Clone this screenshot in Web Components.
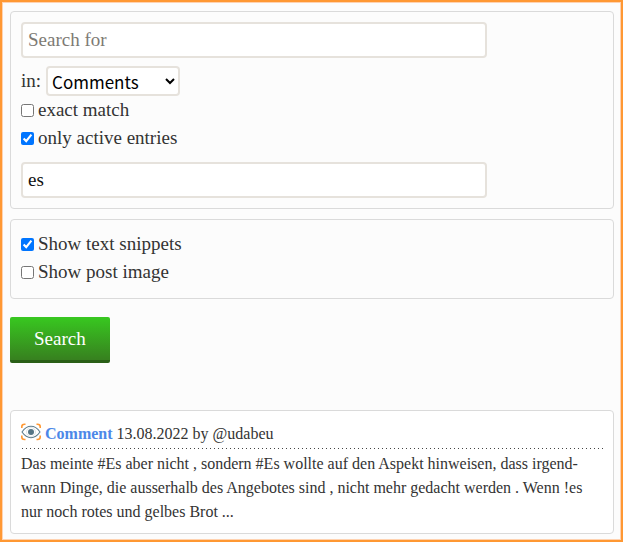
<!DOCTYPE html>
<html lang="de">
<head>
<meta charset="utf-8">
<meta name="viewport" content="width=device-width, initial-scale=1">
<title>Search</title>
<style>
  body {
    margin: 0;
    color: #333;
    font: 19px/28px "Liberation Serif", "Times New Roman", serif;
  }
</style>
</head>
<body>
<search-page>
  <search-form></search-form>
  <search-result slot="results" kind="Comment" date="13.08.2022" author="@udabeu">Das meinte #Es aber nicht , sondern #Es wollte auf den Aspekt hinweisen, dass irgend&shy;wann Dinge, die ausserhalb des Angebotes sind , nicht mehr gedacht werden . Wenn !es nur noch rotes und gelbes Brot ...</search-result>
</search-page>

<script>
function define(name, html, setup) {
  const template = document.createElement("template");
  template.innerHTML = html;

  window.customElements.define(name, class extends HTMLElement {
    constructor() {
      super();
      this.attachShadow({ mode: "open" });
      this.shadowRoot.appendChild(template.content.cloneNode(true));
    }

    connectedCallback() {
      if (setup) setup(this, this.shadowRoot);
    }
  });
}

define("search-page", /*html*/ `
  <style>
    :host {
      display: flex;
      flex-direction: column;
      gap: 47px;
      box-sizing: border-box;
      min-height: 100vh;
      padding: 9px 7px 6px 8px;
      border: 2px solid #ff9833;
      box-shadow: inset 0 0 0 1px #ffd2b0;
      background: #fcfcfc;
    }
  </style>
  <slot></slot>
  <slot name="results"></slot>
`);

define("form-panel", /*html*/ `
  <style>
    :host {
      display: flex;
      flex-direction: column;
      gap: 8px;
      padding: 10px;
      border: 1px solid #dadada;
      border-radius: 4px;
    }
  </style>
  <slot></slot>
`);

define("text-field", /*html*/ `
  <style>
    :host { display: block; }
    input {
      display: block;
      box-sizing: border-box;
      width: 80%;
      height: 36px;
      margin: 0;
      padding: 0 5px;
      border: 2px solid #e6e2dc;
      border-radius: 4px;
      background: #fff;
      color: #111;
      font: inherit;
    }
    input::placeholder { color: #7d7a74; }
  </style>
  <input type="text">
`, (host, root) => {
  const input = root.querySelector("input");
  input.placeholder = host.getAttribute("placeholder") || "";
  input.value = host.getAttribute("value") || "";
  input.setAttribute("aria-label", host.getAttribute("label"));
});

define("area-select", /*html*/ `
  <style>
    :host {
      display: flex;
      align-items: center;
      gap: 5px;
    }
    select {
      box-sizing: border-box;
      width: 134px;
      height: 30px;
      margin: 0;
      padding: 0;
      border: 2px solid #e6e2dc;
      border-radius: 4px;
      background: #fff;
      color: #000;
      font: 17px "Noto Sans CJK SC", "Noto Sans", sans-serif;
    }
  </style>
  <label for="area">in:</label>
  <select id="area">
    <option>Comments</option>
  </select>
`);

define("check-option", /*html*/ `
  <style>
    :host { display: block; }
    label {
      display: flex;
      align-items: center;
      gap: 4px;
    }
    input {
      width: 13px;
      height: 13px;
      margin: 0;
    }
  </style>
  <label><input type="checkbox"><span><slot></slot></span></label>
`, (host, root) => {
  root.querySelector("input").checked = host.hasAttribute("checked");
});

define("search-form", /*html*/ `
  <style>
    :host { display: block; }
    form {
      display: flex;
      flex-direction: column;
      gap: 10px;
    }
    .options { padding-bottom: 2px; }
    button {
      align-self: flex-start;
      height: 46px;
      margin: 8px 0 0;
      padding: 0 24px;
      border: 0;
      border-bottom: 3px solid #2a5f17;
      border-radius: 2px;
      background: linear-gradient(#38c820, #37801f);
      color: #fff;
      font: inherit;
      cursor: pointer;
    }
  </style>
  <form onsubmit="return false">
    <form-panel>
      <text-field label="Search for" placeholder="Search for"></text-field>
      <div class="options">
        <area-select></area-select>
        <check-option>exact match</check-option>
        <check-option checked>only active entries</check-option>
      </div>
      <text-field label="Language" value="es"></text-field>
    </form-panel>
    <form-panel>
      <div class="options">
        <check-option checked>Show text snippets</check-option>
        <check-option>Show post image</check-option>
      </div>
    </form-panel>
    <button type="submit">Search</button>
  </form>
`);

define("eye-icon", /*html*/ `
  <style>
    :host { display: block; }
    svg { display: block; }
  </style>
  <svg width="20" height="18" viewBox="0 0 20 18" fill="none" aria-hidden="true">
    <g stroke="#ff9833" stroke-width="1.6">
      <path d="M.8 5V3.800Q.8 1.300 3.500 1.300H4.500"/>
      <path d="M15.500 1.300H16.500Q19.200 1.300 19.200 3.800V5"/>
      <path d="M.8 12.500V14Q.8 16.500 3.500 16.500H4.500"/>
      <path d="M15.500 16.500H16.500Q19.200 16.500 19.200 14V12.500"/>
    </g>
    <path d="M1 9Q5 3.300 10 3.300T19 9Q15 14.700 10 14.700T1 9Z" stroke="#607d8b" stroke-width="1.100"/>
    <circle cx="10" cy="9" r="4.500" stroke="#c9d4da" stroke-width=".6"/>
    <circle cx="10" cy="9" r="3" fill="#557484"/>
  </svg>
`);

define("search-result", /*html*/ `
  <style>
    :host {
      display: block;
      padding: 11px 10px 9px;
      border: 1px solid #dadada;
      border-radius: 4px;
      background: #fff;
      font-size: 16px;
      line-height: 24px;
    }
    /* sparse dots, one every 4px */
    header {
      display: flex;
      align-items: flex-start;
      gap: 4px;
      margin-bottom: 3px;
      padding-bottom: 3px;
      background: linear-gradient(to right, transparent 1px, #444 1px 2px, transparent 2px) left bottom / 4px 1px repeat-x;
    }
    eye-icon { padding-top: 1px; }
    a {
      color: #4d88e8;
      font-weight: bold;
      text-decoration: none;
    }
    p {
      margin: 0;
      hyphens: manual;
    }
  </style>
  <header>
    <eye-icon></eye-icon>
    <div><a href="#"></a> <span></span></div>
  </header>
  <p><slot></slot></p>
`, (host, root) => {
  root.querySelector("a").textContent = host.getAttribute("kind");
  root.querySelector("header span").textContent =
    `${host.getAttribute("date")} by ${host.getAttribute("author")}`;
});
</script>
</body>
</html>
